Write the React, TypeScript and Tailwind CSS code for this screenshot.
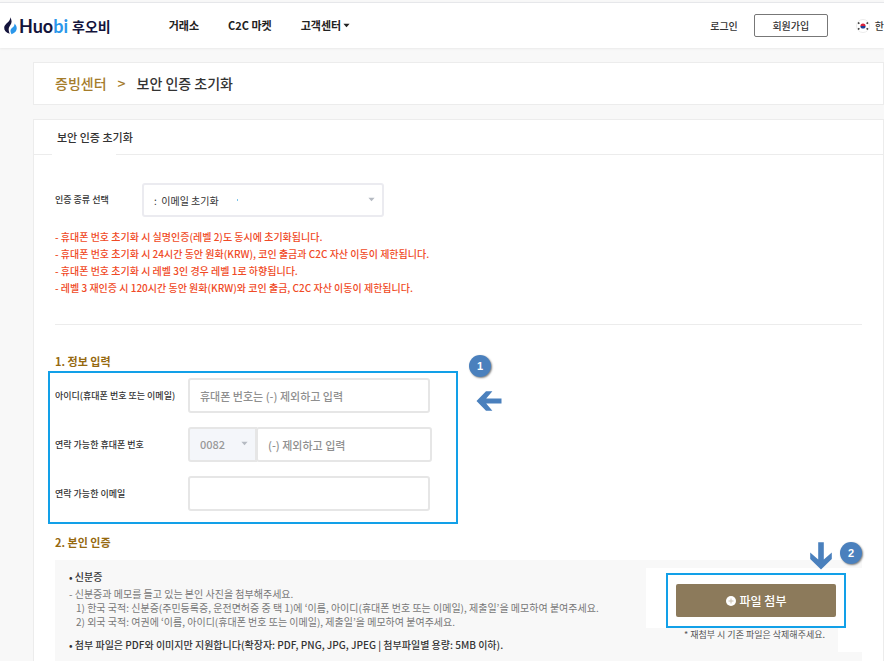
import React, { useState } from "react";

const NOTICES = [
  "- 휴대폰 번호 초기화 시 실명인증(레벨 2)도 동시에 초기화됩니다.",
  "- 휴대폰 번호 초기화 시 24시간 동안 원화(KRW), 코인 출금과 C2C 자산 이동이 제한됩니다.",
  "- 휴대폰 번호 초기화 시 레벨 3인 경우 레벨 1로 하향됩니다.",
  "- 레벨 3 재인증 시 120시간 동안 원화(KRW)와 코인 출금, C2C 자산 이동이 제한됩니다.",
];

const Caret = ({ className = "" }: { className?: string }) => (
  <svg viewBox="0 0 8 5" className={className} fill="currentColor" aria-hidden="true">
    <path d="M0.5 0.5h7L4 4.5z" />
  </svg>
);

const Flame = () => (
  <svg viewBox="0 0 13 18" className="h-[18px] w-[13px]" aria-hidden="true">
    <path d="M6.4 0.2C8 3.8 8 5.6 6.4 8 4.6 10.6 4 12.8 5.8 16.8 1.8 15.6 0 13.2 0.2 10.4 0.6 6.4 6.2 5.4 6.4 0.2Z" fill="#14143c" />
    <path d="M10.6 6.4C14 10 13.6 15.2 7.6 17.2 5.8 14.6 6.2 12.6 8.2 10.8 9.8 9.4 10.6 8.4 10.6 6.4Z" fill="#2a97ea" />
  </svg>
);

const KoreanFlag = () => (
  <svg viewBox="0 0 14 14" className="h-[14px] w-[14px]" aria-hidden="true">
    <circle cx="7" cy="7" r="6.5" fill="#fff" stroke="#ececec" />
    <path d="M4.4 7a2.6 2.6 0 0 1 5.2 0z" fill="#d8213b" />
    <path d="M4.4 7a2.6 2.6 0 0 0 5.2 0z" fill="#1d3f94" />
    <path d="M2 3.6l1.4 1M12 3.6l-1.4 1M2 10.4l1.4-1M12 10.4l-1.4-1" stroke="#333" strokeWidth="1.6" />
  </svg>
);

const ArrowLeft = () => (
  <svg viewBox="0 0 26 22" className="ml-[7px] h-[22px] w-[26px]" fill="#4a80bd" aria-hidden="true">
    <path d="M0.5 11 10 1.2h6.4L10.2 8.4H25.5v5.2H10.2L16.4 20.8H10z" />
  </svg>
);

const ArrowDown = () => (
  <svg viewBox="0 0 22 28" className="h-[28px] w-[22px]" fill="#4a80bd" aria-hidden="true">
    <path d="M11 27.5 0.2 17v-6.6L8.2 17.6V0.3h5.6v17.3l8-7.2V17z" />
  </svg>
);

const Badge = ({ children }: { children: React.ReactNode }) => (
  <span className="flex h-[22px] w-[22px] items-center justify-center rounded-full bg-[#4a80bd] font-['Liberation_Sans'] text-[11px] font-bold text-white shadow-[1px_1px_2px_rgba(0,0,0,0.5)]">
    {children}
  </span>
);

const Header = () => (
  <header className="mt-[2px] flex h-[46px] items-center justify-between border-t border-[#e6e7ea] bg-white pl-1 shadow-[0_1px_2px_rgba(0,0,0,0.06)]">
    <div className="flex items-center">
      <a href="#" className="flex items-center whitespace-nowrap text-[#14143c]">
        <Flame />
        <span className="ml-[2px] font-[Lato] text-[18px] leading-6 font-bold">
          Huo<span className="text-[#2a97ea]">bi</span>
        </span>
        <span className="ml-1 text-[14px] leading-6 font-bold">후오비</span>
      </a>
      <nav className="ml-[58px] flex items-center gap-[29px] text-[11px] font-bold whitespace-nowrap text-[#222]">
        <a href="#">거래소</a>
        <a href="#">C2C 마켓</a>
        <button type="button" className="flex items-center gap-[2px]">
          고객센터
          <Caret className="h-[5px] w-[7px]" />
        </button>
      </nav>
    </div>
    <div className="flex items-center text-[10px] font-medium whitespace-nowrap text-[#333]">
      <a href="#">로그인</a>
      <button type="button" className="ml-4 h-[23px] w-[74px] rounded-[2px] border border-[#777]">
        회원가입
      </button>
      <button type="button" className="ml-7 flex items-center gap-[5px]">
        <KoreanFlag />
        한
      </button>
    </div>
  </header>
);

const inputClass =
  "h-[35px] rounded-[3px] border-2 border-[#e6e6e6] bg-white px-[10px] text-[11px] text-[#555] outline-none placeholder:text-[#8f8f8f]";

const App = () => {
  const [type, setType] = useState("email");

  return (
    <div className="flex min-h-screen flex-col bg-[#f8f8f8] font-['Noto_Sans_CJK_KR','Noto_Sans',sans-serif] text-[#333]">
      <Header />
      <main className="flex flex-1 flex-col pl-[33px]">
        <div className="mt-[14px] flex h-[43px] items-center gap-[11px] border border-[#ececec] bg-white px-[21px] text-[14px] font-medium">
          <a href="#" className="text-[#a57c2b]">증빙센터</a>
          <span className="text-[#a57c2b]">&gt;</span>
          <h1>보안 인증 초기화</h1>
        </div>

        <section className="mt-[14px] flex flex-1 flex-col border border-b-0 border-[#ececec] bg-white">
          {/* The rule under the title is open below the active tab */}
          <h2 className="relative flex h-[35px] items-center border-b border-[#ececec] px-[23px] text-[11px] font-medium after:absolute after:-bottom-px after:left-[18px] after:h-px after:w-16 after:bg-white">
            보안 인증 초기화
          </h2>

          <div className="flex flex-1 flex-col px-[21px] pt-7">
            <div className="flex items-center">
              <label htmlFor="type" className="w-[87px] text-[9px] font-medium">
                인증 종류 선택
              </label>
              <div className="relative">
                <select
                  id="type"
                  value={type}
                  onChange={(e) => setType(e.target.value)}
                  className="h-[34px] w-[242px] appearance-none rounded-[3px] border-2 border-[#ebebf0] bg-white px-[10px] text-[10px] text-[#333]"
                >
                  <option value="email">:&nbsp; 이메일 초기화</option>
                  <option value="phone">휴대폰 번호 초기화</option>
                </select>
                <span className="pointer-events-none absolute top-4 left-[95px] h-[2px] w-px bg-[#7cc4ea]" />
                <Caret className="pointer-events-none absolute top-[14px] right-[9px] h-[5px] w-[7px] text-[#b5bac2]" />
              </div>
            </div>

            <ul className="mt-[11px] text-[10px] leading-[17px] font-medium text-[#f04a26]">
              {NOTICES.map((n) => (
                <li key={n}>{n}</li>
              ))}
            </ul>

            <hr className="mt-7 border-[#ececec]" />

            <h3 className="mt-7 text-[11px] leading-4 font-bold text-[#96690f]">1. 정보 입력</h3>

            <div className="relative mt-[2px] -ml-[7px] flex w-[410px] flex-col gap-[14px] border-2 border-[#12a0e8] px-[5px] pt-[5px] pb-[11px] text-[9px] font-medium">
              <div className="flex items-center">
                <label htmlFor="userId" className="w-[133px]">아이디(휴대폰 번호 또는 이메일)</label>
                <input id="userId" className={`${inputClass} w-[242px]`} placeholder="휴대폰 번호는 (-) 제외하고 입력" />
              </div>
              <div className="flex items-center">
                <label htmlFor="phone" className="w-[133px]">연락 가능한 휴대폰 번호</label>
                <div className="relative">
                  <select
                    aria-label="국가 번호"
                    className="h-[35px] w-[69px] appearance-none rounded-l-[3px] border-2 border-[#e6e6e6] bg-[#f4f6fa] px-[10px] text-[11px] text-[#999]"
                  >
                    <option>0082</option>
                  </select>
                  <Caret className="pointer-events-none absolute top-[14px] right-[9px] h-[5px] w-[7px] text-[#b5bac2]" />
                </div>
                <input id="phone" className={`${inputClass} -ml-px w-[176px]`} placeholder="(-) 제외하고 입력" />
              </div>
              <div className="flex items-center">
                <label htmlFor="email" className="w-[133px]">연락 가능한 이메일</label>
                <input id="email" type="email" className={`${inputClass} w-[242px]`} />
              </div>
              <div className="absolute -top-[18px] left-full ml-[13px] flex flex-col items-start gap-[13px]">
                <Badge>1</Badge>
                <ArrowLeft />
              </div>
            </div>

            <h3 className="mt-[10px] text-[11px] leading-4 font-bold text-[#96690f]">2. 본인 인증</h3>

            <div className="mt-[10px] flex flex-1 justify-between bg-[#f8f8f8] pt-2 pl-[14px]">
              <div className="text-[10px] whitespace-nowrap text-[#777]">
                <p className="mt-px leading-4 font-medium text-[#333]">• 신분증</p>
                <p className="mt-px leading-[15px]">- 신분증과 메모를 들고 있는 본인 사진을 첨부해주세요.</p>
                <ol className="pl-[7px] leading-[14px]">
                  <li>1) 한국 국적: 신분증(주민등록증, 운전면허증 중 택 1)에 ‘이름, 아이디(휴대폰 번호 또는 이메일), 제출일’을 메모하여 붙여주세요.</li>
                  <li>2) 외국 국적: 여권에 ‘이름, 아이디(휴대폰 번호 또는 이메일), 제출일’을 메모하여 붙여주세요.</li>
                </ol>
                <p className="mt-2 leading-4 font-medium text-[#333]">• 첨부 파일은 PDF와 이미지만 지원합니다(확장자: PDF, PNG, JPG, JPEG | 첨부파일별 용량: 5MB 이하).</p>
              </div>
              <div className="relative">
                <div className="bg-white pt-[5px] pr-4 pl-5">
                  <div className="border-2 border-[#12a0e8] bg-white px-2 py-[9px]">
                    <button
                      type="button"
                      className="flex h-[33px] w-[160px] items-center justify-center gap-1 rounded-[2px] bg-[#8c7a5b] text-[12px] font-medium text-white"
                    >
                      <svg viewBox="0 0 10 10" className="h-[10px] w-[10px]" aria-hidden="true">
                        <circle cx="5" cy="5" r="5" fill="#fff" />
                        <path d="M5 2.5v5M2.5 5h5" stroke="#c9c0b0" strokeWidth="1" />
                      </svg>
                      파일 첨부
                    </button>
                  </div>
                </div>
                <div className="flex justify-between">
                  <p className="pl-[38px] text-[9px] leading-[13px] text-[#555]">* 재첨부 시 기존 파일은 삭제해주세요.</p>
                  <div className="h-6 w-6 bg-white" />
                </div>
                <div className="absolute -top-[26px] right-0 flex items-start gap-2">
                  <ArrowDown />
                  <Badge>2</Badge>
                </div>
              </div>
            </div>
          </div>
        </section>
      </main>
    </div>
  );
};

export default App;
